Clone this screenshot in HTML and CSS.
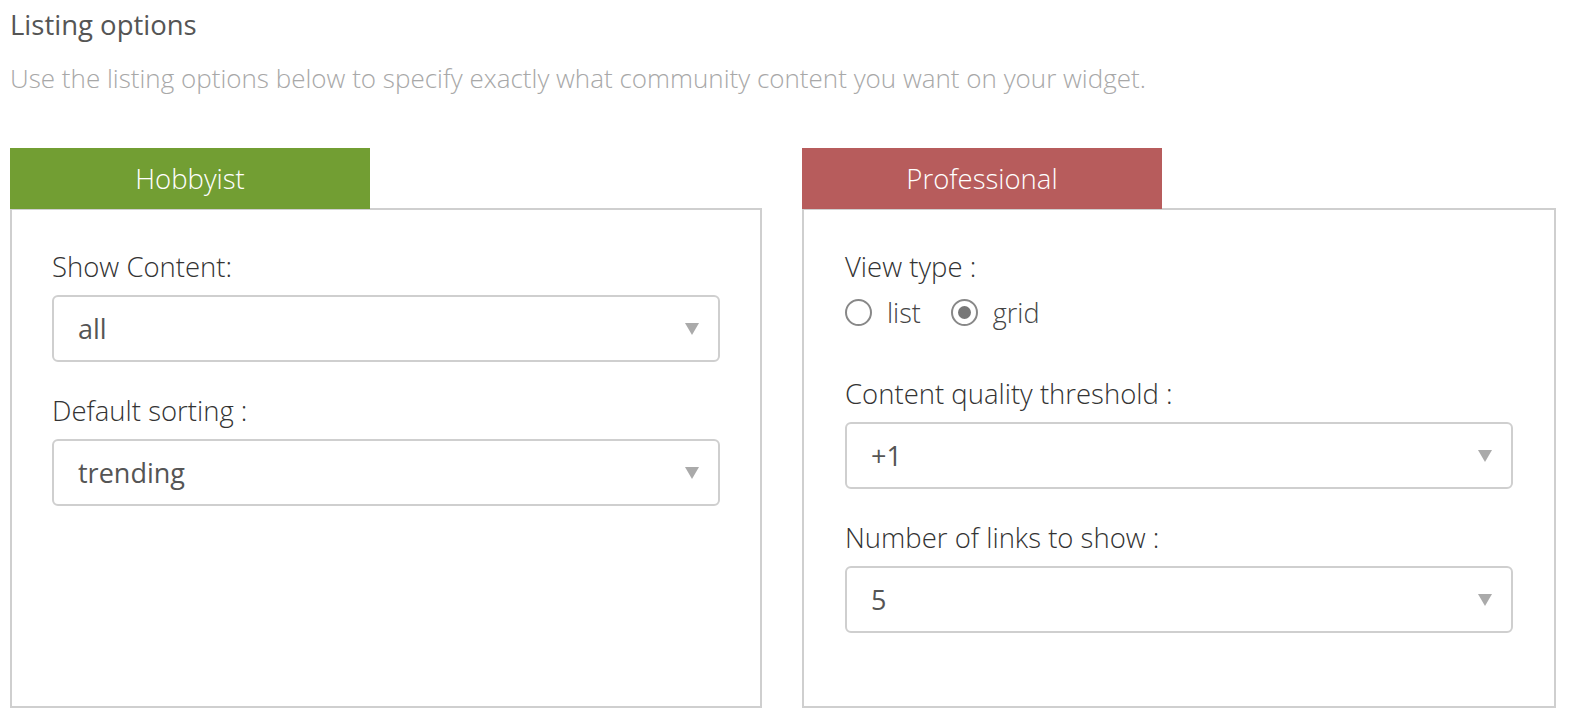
FILE: index.html
```html
<!DOCTYPE html>
<html>
<head>
<meta charset="utf-8">
<link rel="stylesheet" href="styles.css">
</head>
<body>
<div class="page">
  <h1 class="title">Listing options</h1>
  <p class="subtitle">Use the listing options below to specify exactly what community content you want on your widget.</p>
  <div class="columns">
    <section class="card">
      <div class="tab tab-green">Hobbyist</div>
      <div class="panel">
        <div class="field">
          <div class="label">Show Content:</div>
          <div class="select"><span>all</span><span class="arrow"></span></div>
        </div>
        <div class="field">
          <div class="label">Default sorting :</div>
          <div class="select"><span>trending</span><span class="arrow"></span></div>
        </div>
      </div>
    </section>
    <section class="card">
      <div class="tab tab-red">Professional</div>
      <div class="panel panel-right">
        <div class="field">
          <div class="label">View type :</div>
          <div class="radios">
            <span class="radio"></span><span class="radio-label">list</span>
            <span class="radio checked"></span><span class="radio-label">grid</span>
          </div>
        </div>
        <div class="field field-gap">
          <div class="label">Content quality threshold :</div>
          <div class="select"><span>+1</span><span class="arrow"></span></div>
        </div>
        <div class="field">
          <div class="label">Number of links to show :</div>
          <div class="select"><span>5</span><span class="arrow"></span></div>
        </div>
      </div>
    </section>
  </div>
</div>
</body>
</html>
```

FILE: styles.css
```css
* { box-sizing: border-box; }
html, body { margin: 0; padding: 0; background: #fff; height: 716px; overflow: hidden; }
body { font-family: "Open Sans", "Noto Sans", sans-serif; }
.page { padding: 8px 0 0 10px; }
.title {
  margin: 0;
  font-size: 27.5px;
  line-height: 34px;
  font-weight: 400;
  color: #555;
}
.subtitle {
  margin: 19px 0 0;
  font-size: 26px;
  line-height: 34px;
  font-weight: 300;
  color: #a8a8a8;
  white-space: nowrap;
}
.columns {
  margin-top: 53px;
  display: grid;
  grid-template-columns: 752px 754px;
  column-gap: 40px;
}
.card { display: flex; flex-direction: column; }
.tab {
  width: 360px;
  height: 61px;
  display: flex;
  align-items: center;
  justify-content: center;
  color: #fff;
  font-size: 27.5px;
  font-weight: 300;
  position: relative;
  z-index: 1;
  margin-bottom: -1px;
}
.tab-green { background: #729e33; }
.tab-red { background: #b75c5c; }
.panel {
  flex: 1;
  border: 2px solid #cfcfcf;
  padding: 40px 40px 73px 40px;
}
.panel-right { padding-left: 41px; padding-right: 41px; }
.field + .field { margin-top: 32px; }
.field-gap { margin-top: 48px !important; }
.label {
  font-size: 27.5px;
  line-height: 34px;
  font-weight: 300;
  color: #333;
  margin-bottom: 11px;
}
.select {
  height: 67px;
  border: 2px solid #cfcfcf;
  border-radius: 6px;
  display: flex;
  align-items: center;
  justify-content: space-between;
  padding: 0 19px 0 24px;
  font-size: 27px;
  color: #555;
  font-weight: 400;
}
.arrow {
  width: 0;
  height: 0;
  border-left: 7px solid transparent;
  border-right: 7px solid transparent;
  border-top: 12px solid #aaa;
}
.radios {
  display: flex;
  align-items: center;
  height: 34px;
  margin-top: 1px;
}
.radio {
  width: 27px;
  height: 27px;
  border: 2px solid #888;
  border-radius: 50%;
  display: flex;
  align-items: center;
  justify-content: center;
  flex: none;
}
.radio.checked::after {
  content: "";
  width: 13px;
  height: 13px;
  border-radius: 50%;
  background: #777;
}
.radio-label {
  font-size: 27px;
  font-weight: 300;
  color: #444;
  margin-left: 15px;
  margin-right: 30px;
}
```
